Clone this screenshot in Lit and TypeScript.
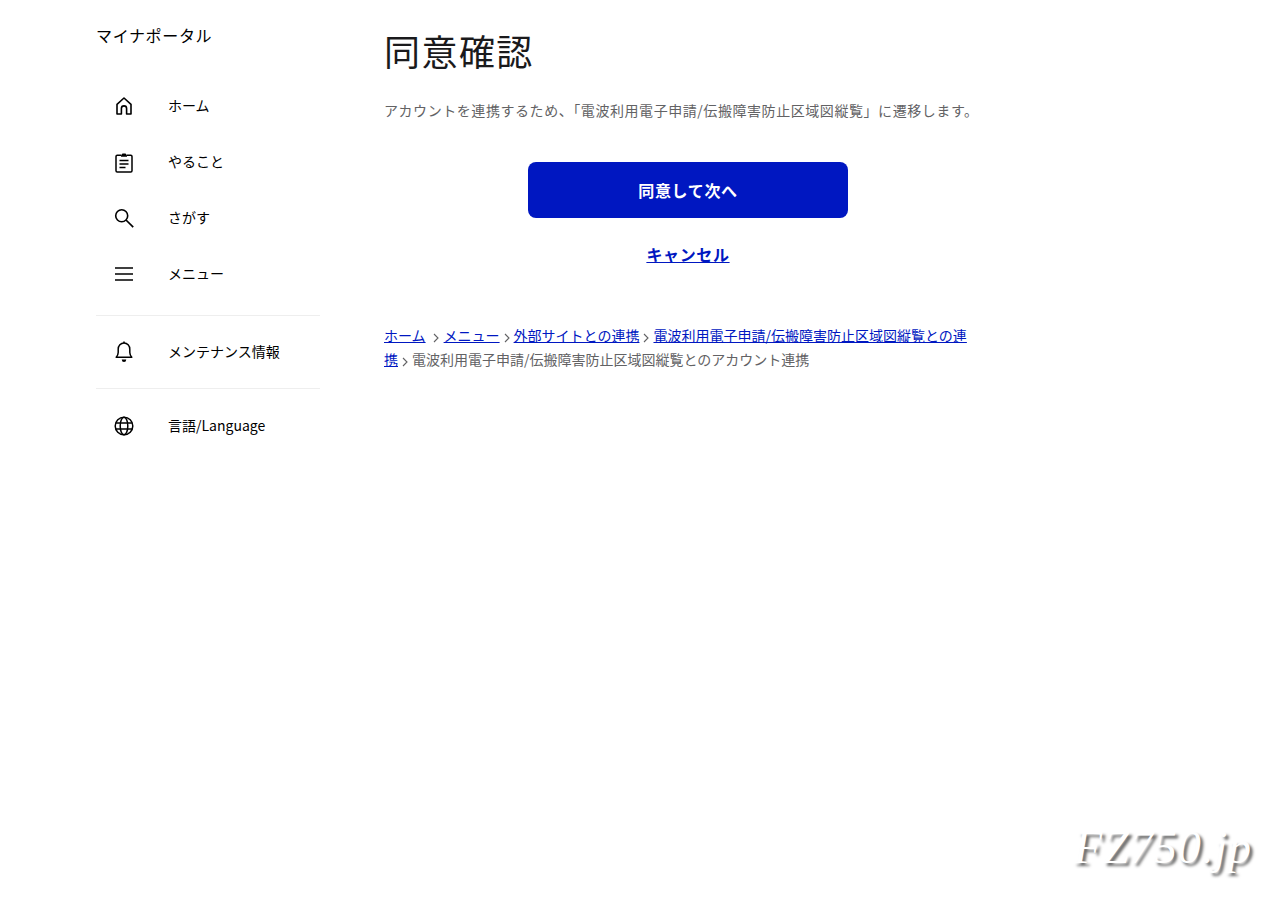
import { LitElement, html, css, svg } from "lit";
import { customElement } from "lit/decorators.js";

const icons: Record<string, unknown> = {
  home: svg`<path d="M5 20V10.300L12 4l7 6.300V20h-4.400v-5.500a2.600 2.600 0 0 0-5.200 0V20H5Z" fill="none" stroke="currentColor" stroke-width="1.600" stroke-linejoin="round"/>`,
  todo: svg`<path d="M9 5.200H5.200C4.500 5.200 4 5.700 4 6.400v14.400c0 .7.5 1.200 1.200 1.200h13.600c.7 0 1.200-.5 1.200-1.200V6.400c0-.7-.5-1.200-1.200-1.200H15" fill="none" stroke="currentColor" stroke-width="1.500"/><path d="M9 6.800V5.200l1.500-1.800h3L15 5.200v1.600Z" fill="currentColor"/><path d="M7.500 10.500h9M7.500 14h9M7.500 17.500h6" fill="none" stroke="currentColor" stroke-width="1.500"/>`,
  search: svg`<circle cx="9.700" cy="9.700" r="6" fill="none" stroke="currentColor" stroke-width="1.600"/><path d="M14 14l7.200 7.200" fill="none" stroke="currentColor" stroke-width="1.700"/>`,
  menu: svg`<path d="M3 6h18M3 12h18M3 18h18" fill="none" stroke="currentColor" stroke-width="1.500"/>`,
  bell: svg`<g transform="translate(0 -1)"><path d="M4.200 18.200h15.600c-1.200-1.300-2-2.600-2-4.700v-3.200C17.800 6.800 15.300 4 12 4S6.200 6.800 6.200 10.300v3.200c0 2.100-.8 3.400-2 4.700Z" fill="none" stroke="currentColor" stroke-width="1.500" stroke-linejoin="round"/><path d="M12 2.500V4" stroke="currentColor" stroke-width="1.500"/><path d="M9.800 20.500h4.400v.3a2.200 2.200 0 0 1-4.400 0Z" fill="currentColor"/></g>`,
  globe: svg`<g fill="none" stroke="currentColor" stroke-width="1.500"><circle cx="12" cy="12" r="8.800"/><ellipse cx="12" cy="12" rx="3.800" ry="8.800"/><path d="M3.800 9h16.400M3.800 15h16.400"/></g>`,
};

@customElement("app-root")
export class AppRoot extends LitElement {
  static styles = css`
    :host {
      display: block;
      position: relative;
      min-height: 900px;
      background: #fff;
      font-family: "Noto Sans CJK JP", "Noto Sans", sans-serif;
      color: #1a1a1c;
    }
    .page {
      display: flex;
      padding: 0 0 0 96px;
      gap: 64px;
    }
    .side {
      width: 224px;
      flex: none;
    }
    .brand {
      font-size: 16px;
      line-height: 24px;
      padding-top: 23px;
      height: 54px;
      box-sizing: border-box;
      letter-spacing: 0.04em;
      color: #000;
    }
    .nav {
      display: flex;
      align-items: center;
      height: 56px;
      padding-left: 16px;
      gap: 32px;
      font-size: 14px;
      color: #000;
    }
    .nav span {
      line-height: 24px;
      padding-bottom: 2px;
    }
    .nav svg {
      width: 24px;
      height: 24px;
      flex: none;
    }
    .rule {
      height: 1px;
      background: #eeeeee;
    }
    .first {
      margin-top: 24px;
    }
    .rule.a {
      margin-top: 13px;
      margin-bottom: 8px;
    }
    .rule.b {
      margin-top: 8px;
      margin-bottom: 9px;
    }
    .main {
      width: 608px;
      flex: none;
    }
    h1 {
      margin: 0;
      padding-top: 23px;
      font-size: 36px;
      line-height: 54px;
      font-weight: 400;
      letter-spacing: 0.04em;
      color: #1a1a1c;
      height: 55px;
    }
    .lead {
      margin: 0;
      padding-top: 20px;
      font-size: 14px;
      line-height: 24px;
      letter-spacing: 0.04em;
      color: #626264;
    }
    .actions {
      display: flex;
      flex-direction: column;
      align-items: center;
      padding-top: 40px;
    }
    .btn {
      display: flex;
      align-items: center;
      justify-content: center;
      width: 320px;
      height: 56px;
      border-radius: 8px;
      background: #0017c1;
      color: #fff;
      font-size: 16px;
      font-weight: 700;
      letter-spacing: 0.04em;
    }
    .cancel {
      margin-top: 24px;
      font-size: 16px;
      line-height: 24px;
      font-weight: 700;
      letter-spacing: 0.04em;
      color: #0017c1;
      text-decoration: underline;
    }
    .crumbs {
      width: 592px;
      margin-top: 57px;
      font-size: 14px;
      line-height: 24px;
      color: #626264;
    }
    .crumbs a {
      color: #0017c1;
      text-decoration: underline;
    }
    .chev {
      display: inline-block;
      width: 6px;
      height: 10px;
      margin: 0 4px;
      vertical-align: -2px;
    }
    .chev.wide {
      margin-left: 7px;
      margin-right: 5px;
    }
    .mark {
      position: absolute;
      right: 28px;
      top: 818px;
      font-family: "Liberation Serif", serif;
      font-style: italic;
      font-size: 46px;
      line-height: 60px;
      color: #fff;
      letter-spacing: 1px;
      text-shadow: 3px 3px 3px rgba(0, 0, 0, 0.6);
    }
  `;

  private chev(wide = false) {
    return html`<svg class="chev ${wide ? "wide" : ""}" viewBox="0 0 6 10"><path d="M1 1l4 4-4 4" fill="none" stroke="#626264" stroke-width="1.100"/></svg>`;
  }

  private nav(icon: string, label: string, cls = "") {
    return html`<div class="nav ${cls}"><svg viewBox="0 0 24 24">${icons[icon]}</svg><span>${label}</span></div>`;
  }

  render() {
    return html`
      <div class="page">
        <aside class="side">
          <div class="brand">マイナポータル</div>
          ${this.nav("home", "ホーム", "first")} ${this.nav("todo", "やること")}
          ${this.nav("search", "さがす")} ${this.nav("menu", "メニュー")}
          <div class="rule a"></div>
          ${this.nav("bell", "メンテナンス情報")}
          <div class="rule b"></div>
          ${this.nav("globe", "言語/Language")}
        </aside>
        <main class="main">
          <h1>同意確認</h1>
          <p class="lead">アカウントを連携するため、「電波利用電子申請/伝搬障害防止区域図縦覧」に遷移します。</p>
          <div class="actions">
            <div class="btn">同意して次へ</div>
            <a class="cancel">キャンセル</a>
          </div>
          <div class="crumbs">
            <a>ホーム</a>${this.chev(true)}<a>メニュー</a>${this.chev()}<a>外部サイトとの連携</a>${this.chev()}<a>電波利用電子申請/伝搬障害防止区域図縦覧との連携</a>${this.chev()}電波利用電子申請/伝搬障害防止区域図縦覧とのアカウント連携
          </div>
        </main>
      </div>
      <div class="mark">FZ750.jp</div>
    `;
  }
}
